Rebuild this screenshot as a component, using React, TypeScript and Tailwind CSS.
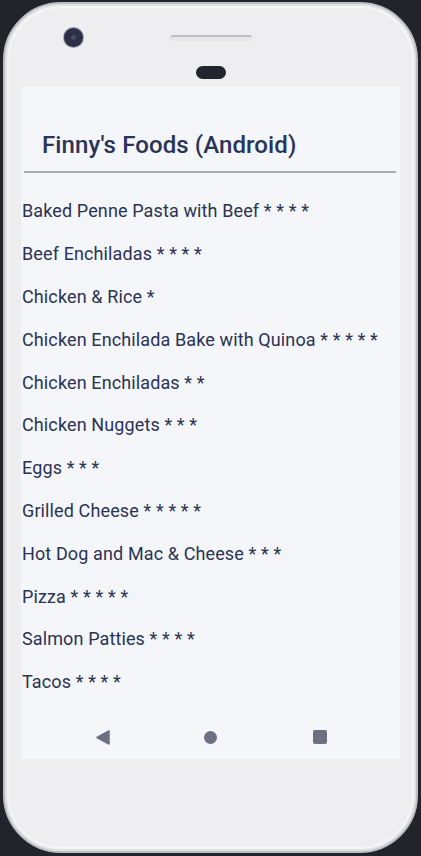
const foods = [
  'Baked Penne Pasta with Beef * * * *',
  'Beef Enchiladas * * * *',
  'Chicken & Rice *',
  'Chicken Enchilada Bake with Quinoa * * * * *',
  'Chicken Enchiladas * *',
  'Chicken Nuggets * * *',
  'Eggs * * *',
  'Grilled Cheese * * * * *',
  'Hot Dog and Mac & Cheese * * *',
  'Pizza * * * * *',
  'Salmon Patties * * * *',
  'Tacos * * * *',
]

function NavBar() {
  return (
    <div className="flex h-[44px] items-center">
      <div className="flex w-[158px] justify-center pl-[6px]">
        <svg width="14" height="15" viewBox="0 0 14 15">
          <path d="M13 1 L1 7.5 L13 14 Z" fill="#6d7081" stroke="#6d7081" strokeWidth="1.5" strokeLinejoin="round" />
        </svg>
      </div>
      <div className="flex flex-1 justify-center">
        <div className="h-[13px] w-[13px] rounded-full bg-[#6d7081]" />
      </div>
      <div className="flex w-[158px] justify-center pr-[2px]">
        <div className="h-[14px] w-[14px] rounded-[2px] bg-[#6d7081]" />
      </div>
    </div>
  )
}

export default function App() {
  return (
    <div className="h-[856px] w-full bg-[#23232b] pl-[3px] pt-[2px]" style={{ fontFamily: 'Roboto, "Noto Sans", sans-serif' }}>
      <div className="flex h-[851px] w-[415px] flex-col rounded-[58px] border-2 border-[#bdbdc4] bg-[#eeeef1] shadow-[inset_0_0_0_2px_#e2e2e6,inset_0_0_0_4px_#f6f6f8]">
        {/* top bezel */}
        <div className="relative flex h-[83px] flex-col items-center">
          <div className="absolute left-[59px] top-[24px] flex h-[19px] w-[19px] items-center justify-center rounded-full bg-[#2b3046] ring-1 ring-[#9a9cae]">
            <div className="h-[5px] w-[5px] rounded-full bg-[#454b66]" />
          </div>
          <div className="mt-[31px] h-[6px] w-[82px] rounded-[3px] border-t-2 border-[#bebec4] bg-[#e6e6ea]" />
          <div className="mt-[25px] h-[13px] w-[30px] rounded-full bg-[#23242d]" />
        </div>

        {/* screen */}
        <div className="ml-[16px] flex h-[672px] w-[379px] flex-col bg-[#f5f6fa] text-[#2a3354]">
          <div className="pl-[21px] pt-[43px] text-[24px] font-medium leading-[30px] tracking-[0.1px] text-[#283458]">
            Finny's Foods (Android)
          </div>
          <div className="ml-[3px] mr-[4px] mt-[11px] h-[2px] bg-[#a9a9ae]" />
          <div className="mt-[17px] flex flex-1 flex-col">
            {foods.map((f) => (
              <div key={f} className="flex h-[42.8px] items-center pl-[1px] text-[18px] leading-[22px] tracking-[0.12px]">
                {f}
              </div>
            ))}
          </div>
          <NavBar />
        </div>
      </div>
    </div>
  )
}
